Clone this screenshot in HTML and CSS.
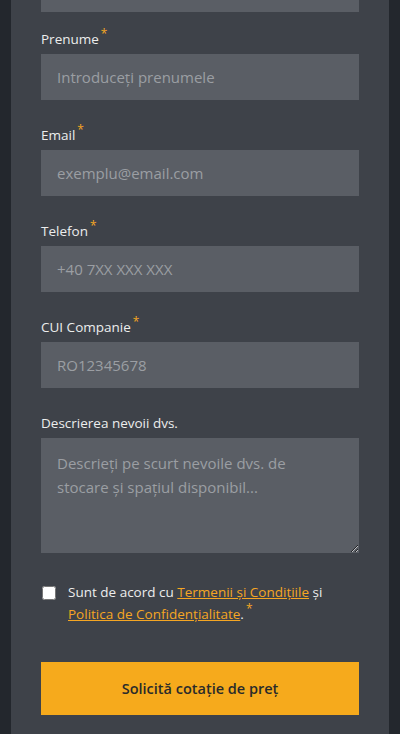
FILE: index.html
```html
<!DOCTYPE html>
<html lang="ro">
<head>
    <meta charset="UTF-8">
    <meta name="viewport" content="width=device-width, initial-scale=1.0">
    <title>Cerere ofertă</title>
    <link rel="stylesheet" href="styles.css">
</head>
<body>
    <div class="wrap">
        <form class="card" onsubmit="return false;">
            <div class="field first">
                <label for="nume">Nume<span class="req">*</span></label>
                <input type="text" id="nume" placeholder="Introduceți numele">
            </div>
            <div class="field">
                <label for="prenume">Prenume<span class="req">*</span></label>
                <input type="text" id="prenume" placeholder="Introduceți prenumele">
            </div>
            <div class="field">
                <label for="email">Email<span class="req">*</span></label>
                <input type="email" id="email" placeholder="exemplu@email.com">
            </div>
            <div class="field">
                <label for="telefon">Telefon<span class="req">*</span></label>
                <input type="tel" id="telefon" placeholder="+40 7XX XXX XXX">
            </div>
            <div class="field">
                <label for="cui">CUI Companie<span class="req">*</span></label>
                <input type="text" id="cui" placeholder="RO12345678">
            </div>
            <div class="field">
                <label for="descriere">Descrierea nevoii dvs.</label>
                <textarea id="descriere" placeholder="Descrieți pe scurt nevoile dvs. de stocare și spațiul disponibil..."></textarea>
            </div>
            <div class="agree">
                <input type="checkbox" id="acord">
                <label for="acord">Sunt de acord cu <a href="#">Termenii și Condițiile</a> și <a href="#">Politica de Confidențialitate</a>.<span class="req">*</span></label>
            </div>
            <button type="submit" class="submit">Solicită cotație de preț</button>
        </form>
    </div>
</body>
</html>
```

FILE: styles.css
```css
html, body {
    margin: 0;
    padding: 0;
}
body {
    font-family: "Open Sans", "Noto Sans", sans-serif;
    background-color: #23272d;
    color: #e6e7e9;
    overflow: hidden;
}
.wrap {
    padding: 0 11px;
    margin-top: -90px;
}
.card {
    background-color: #3e4249;
    padding: 30px 30px 40px;
}
.field {
    margin-bottom: 24px;
}
.field.first {
    margin-bottom: 16px;
}
.field label {
    display: block;
    font-size: 13.5px;
    line-height: 22px;
    margin-bottom: 4px;
    color: #eceded;
}
.req {
    color: #f5a623;
    font-size: 12px;
    vertical-align: 6px;
    margin-left: 2px;
    line-height: 0;
}
input[type="text"],
input[type="email"],
input[type="tel"],
textarea {
    display: block;
    box-sizing: border-box;
    width: 100%;
    height: 46px;
    padding: 0 16px;
    border: none;
    border-radius: 0;
    background-color: #5a5e65;
    color: #e6e7e9;
    font-family: inherit;
    font-size: 15px;
    outline: none;
}
textarea {
    height: 115px;
    padding: 13px 26px 13px 16px;
    line-height: 24px;
    resize: vertical;
}
::placeholder {
    color: #9b9ea3;
}
.agree {
    display: flex;
    align-items: flex-start;
    gap: 12px;
    margin-top: 28px;
    margin-bottom: 37px;
}
.agree input {
    width: 14px;
    height: 14px;
    margin: 5px 0 0 1px;
    flex-shrink: 0;
}
.agree label {
    font-size: 13.5px;
    line-height: 22px;
    color: #eceded;
}
.agree a {
    color: #f5a623;
    text-decoration: underline;
}
.submit {
    display: block;
    width: 100%;
    height: 53px;
    border: none;
    border-radius: 0;
    background-color: #f6aa1c;
    color: #2a2a2a;
    font-family: inherit;
    font-size: 14.5px;
    font-weight: 600;
    cursor: pointer;
}
```
